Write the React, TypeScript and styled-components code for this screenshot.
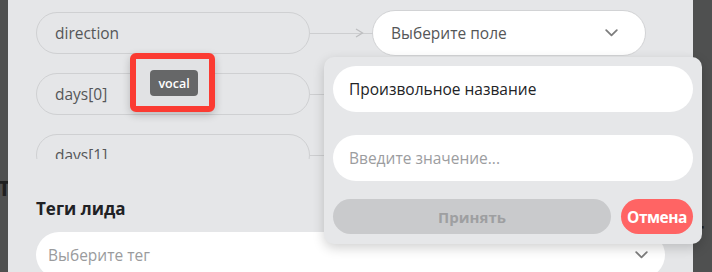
import React from "react";
import styled, { createGlobalStyle } from "styled-components";

const GlobalStyle = createGlobalStyle`
    html, body {
        margin: 0;
        padding: 0;
        background: #4f5050;
        overflow: hidden;
    }
    * { box-sizing: border-box; }
`;

const rows = [
    { field: "direction", arrow: true },
    { field: "days[0]", arrow: false },
    { field: "days[1]", arrow: false },
];

function Chevron({ color = "#7d7d7d" }: { color?: string }) {
    return (
        <svg width="13" height="8" viewBox="0 0 13 8" fill="none">
            <polyline points="1.2,1.2 6.5,6.3 11.8,1.2" stroke={color} strokeWidth="1.8" strokeLinecap="round" strokeLinejoin="round" />
        </svg>
    );
}

export default function App() {
    return (
        <>
            <GlobalStyle />
            <Page>
                <Backdrop>
                    <GhostText>Т</GhostText>
                    <GhostText $right>т</GhostText>
                </Backdrop>
                <Modal>
                    <MapList>
                        {rows.map((r) => (
                            <MapRow key={r.field}>
                                <FieldPill>{r.field}</FieldPill>
                                <Connector>
                                    {r.arrow && (
                                        <ArrowHead width="9" height="10" viewBox="0 0 9 10" fill="none">
                                            <polyline points="1,1 7.5,5 1,9" stroke="#bdbec0" strokeWidth="1.3" />
                                        </ArrowHead>
                                    )}
                                </Connector>
                                <TargetSelect>
                                    <span>Выберите поле</span>
                                    <Chevron />
                                </TargetSelect>
                            </MapRow>
                        ))}
                    </MapList>

                    <SectionTitle>Теги лида</SectionTitle>
                    <TagSelect>
                        <span>Выберите тег</span>
                        <Chevron />
                    </TagSelect>

                    <Popover>
                        <TextInput>Произвольное название</TextInput>
                        <TextInput $placeholder>Введите значение...</TextInput>
                        <Actions>
                            <AcceptButton disabled>Принять</AcceptButton>
                            <CancelButton>Отмена</CancelButton>
                        </Actions>
                    </Popover>

                    <Annotation>
                        <Badge>vocal</Badge>
                    </Annotation>
                </Modal>
            </Page>
        </>
    );
}

const Page = styled.div`
    position: relative;
    width: 712px;
    height: 272px;
    overflow: hidden;
    font-family: "Open Sans", "Noto Sans", sans-serif;
`;

const Backdrop = styled.div`
    position: absolute;
    inset: 0;
`;

const GhostText = styled.span<{ $right?: boolean }>`
    position: absolute;
    top: ${(p) => (p.$right ? "214px" : "172px")};
    left: ${(p) => (p.$right ? "692px" : "-2px")};
    font-size: 22px;
    font-weight: 700;
    color: #1f2020;
`;

const Modal = styled.div`
    position: relative;
    margin-left: 8px;
    width: 685px;
    height: 272px;
    background: #e5e6e8;
    padding: 0 28px;
`;

const MapList = styled.div`
    height: 159px;
    overflow: hidden;
    padding-top: 10px;
    display: flex;
    flex-direction: column;
    gap: 15px;
`;

const MapRow = styled.div`
    display: flex;
    align-items: center;
    height: 46px;
    flex-shrink: 0;
`;

const FieldPill = styled.div`
    width: 274px;
    height: 42px;
    border: 1px solid #cfd0d2;
    border-radius: 21px;
    display: flex;
    align-items: center;
    padding-left: 18px;
    font-size: 15.5px;
    color: #555658;
`;

const Connector = styled.div`
    position: relative;
    width: 63px;
    height: 1px;
    background: #cdced0;
    margin-right: -1px;
`;

const ArrowHead = styled.svg`
    position: absolute;
    right: 9px;
    top: -5px;
`;

const TargetSelect = styled.div`
    width: 274px;
    height: 46px;
    background: #fff;
    border: 1px solid #d2d3d5;
    border-radius: 23px;
    display: flex;
    align-items: center;
    justify-content: space-between;
    padding: 0 27px 0 18px;
    font-size: 15.5px;
    color: #555658;
`;

const SectionTitle = styled.h3`
    margin: 38px 0 0;
    font-size: 17px;
    line-height: 24px;
    font-weight: 700;
    color: #202124;
`;

const TagSelect = styled.div`
    margin-top: 11px;
    height: 46px;
    background: #fff;
    border-radius: 23px;
    display: flex;
    align-items: center;
    justify-content: space-between;
    padding: 0 17px 0 12px;
    font-size: 15.5px;
    color: #9a9b9d;
`;

const Popover = styled.div`
    position: absolute;
    left: 316px;
    top: 57px;
    width: 378px;
    padding: 9px 9px 10px;
    background: #e6e7e9;
    border-radius: 10px;
    box-shadow: 0 4px 12px rgba(0, 0, 0, 0.18);
    display: flex;
    flex-direction: column;
`;

const TextInput = styled.div<{ $placeholder?: boolean }>`
    height: 46px;
    background: #fff;
    border-radius: 23px;
    display: flex;
    align-items: center;
    padding-left: 16px;
    font-size: 15.5px;
    color: ${(p) => (p.$placeholder ? "#9c9d9f" : "#222326")};
    & + & {
        margin-top: 23px;
    }
`;

const Actions = styled.div`
    margin-top: 18px;
    display: flex;
    gap: 10px;
    height: 35px;
`;

const AcceptButton = styled.button`
    flex: 1;
    border: none;
    border-radius: 18px;
    background: #c9cacc;
    color: #9e9fa1;
    font-family: inherit;
    font-size: 15px;
    font-weight: 700;
`;

const CancelButton = styled.button`
    width: 72px;
    border: none;
    border-radius: 18px;
    background: #ff6464;
    color: #fff;
    font-family: inherit;
    font-size: 15.5px;
    font-weight: 700;
    letter-spacing: -0.5px;
    padding: 0;
    display: flex;
    align-items: center;
    justify-content: center;
    white-space: nowrap;
`;

const Annotation = styled.div`
    position: absolute;
    left: 122px;
    top: 53px;
    width: 85px;
    height: 59px;
    border: 6px solid #fb3b32;
    border-radius: 6px;
    background: #e1e2e4;
    box-shadow: 0 3px 8px rgba(0, 0, 0, 0.2);
    display: flex;
    align-items: center;
    justify-content: center;
`;

const Badge = styled.span`
    width: 48px;
    height: 26px;
    border-radius: 4px;
    background: #666768;
    color: #fff;
    font-size: 12.5px;
    font-weight: 600;
    display: flex;
    align-items: center;
    justify-content: center;
    margin-left: 3px;
    margin-top: 1px;
`;
